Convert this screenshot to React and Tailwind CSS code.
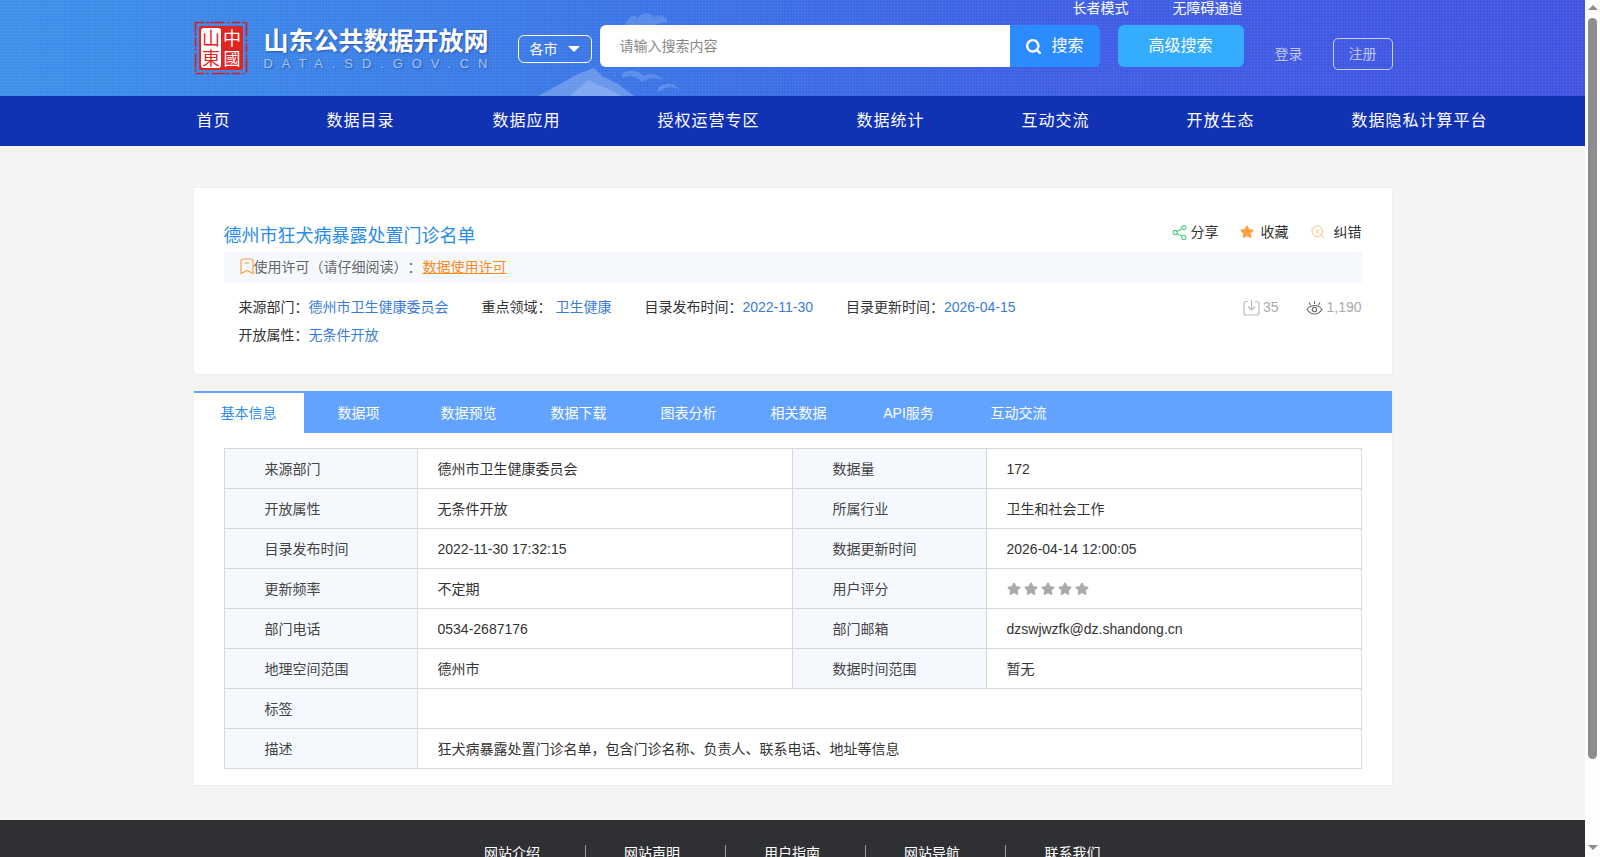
import React from 'react';
import { Search, Star, Share2, SearchX } from 'lucide-react';

const NAV = [
  ['首页', 'w-[130px]'],
  ['数据目录', 'w-[166px]'],
  ['数据应用', 'w-[165px]'],
  ['授权运营专区', 'w-[199px]'],
  ['数据统计', 'w-[165px]'],
  ['互动交流', 'w-[165px]'],
  ['开放生态', 'w-[165px]'],
  ['数据隐私计算平台', 'w-[135px]'],
];

const TABS = ['基本信息', '数据项', '数据预览', '数据下载', '图表分析', '相关数据', 'API服务', '互动交流'];

const ROWS = [
  ['来源部门', '德州市卫生健康委员会', '数据量', '172'],
  ['开放属性', '无条件开放', '所属行业', '卫生和社会工作'],
  ['目录发布时间', '2022-11-30 17:32:15', '数据更新时间', '2026-04-14 12:00:05'],
  ['更新频率', '不定期', '用户评分', 'stars'],
  ['部门电话', '0534-2687176', '部门邮箱', 'dzswjwzfk@dz.shandong.cn'],
  ['地理空间范围', '德州市', '数据时间范围', '暂无'],
];

const FOOTER = ['网站介绍', '网站声明', '用户指南', '网站导航', '联系我们'];

function Logo() {
  return (
    <svg width="54" height="54" viewBox="0 0 54 54" className="shrink-0">
      <rect x="1.5" y="1.5" width="51" height="51" fill="none" stroke="#d81e1e" strokeWidth="1.6" strokeDasharray="9 2 3 1 14 3 2 2" />
      <rect x="5" y="5" width="44" height="44" rx="2" fill="#e0241f" />
      <rect x="7" y="7" width="20" height="40" rx="3" fill="#fff" />
      <text x="17" y="24" textAnchor="middle" fontSize="18" fill="#e0241f" fontFamily="Noto Sans CJK SC">山</text>
      <text x="17" y="44" textAnchor="middle" fontSize="18" fill="#e0241f" fontFamily="Noto Sans CJK SC">東</text>
      <text x="38" y="24" textAnchor="middle" fontSize="18" fill="#fff" fontFamily="Noto Sans CJK SC">中</text>
      <text x="38" y="44" textAnchor="middle" fontSize="17" fill="#fff" fontFamily="Noto Sans CJK SC">國</text>
    </svg>
  );
}

// faint mountain and cloud print behind the search box
function Mountain() {
  return (
    <svg width="170" height="96" viewBox="0 0 170 96" className="absolute left-[530px] top-0" fill="#cfe0fa">
      <path d="M8 96 L30 84 L48 74 L64 68 L72 76 L88 84 L104 96 Z" fillOpacity="0.3" />
      <path d="M40 96 L58 80 L76 88 L92 96 Z" fillOpacity="0.25" />
      <path d="M96 24 C98 16 104 14 108 18 C112 12 120 12 124 17 C130 14 136 16 138 22 C132 24 128 22 124 26 C118 22 112 28 106 26 C102 28 98 28 96 24 Z" fillOpacity="0.2" />
      <path d="M92 74 C100 68 108 70 114 76 C120 72 128 74 134 80 C124 77 118 78 112 82 C106 76 100 74 92 78 Z" fillOpacity="0.22" />
      <path d="M128 88 C134 82 144 82 150 90 C142 86 136 86 128 92 Z" fillOpacity="0.22" />
    </svg>
  );
}

function LicenseIcon() {
  return (
    <svg width="14" height="17" viewBox="0 0 14 17" fill="none" stroke="#ff9f43" strokeWidth="1.2" className="shrink-0 -translate-y-[1px]">
      <path d="M2.5 1h9a1.5 1.5 0 0 1 1.5 1.500V15.500L7 12.500 1 15.500V2.500A1.500 1.500 0 0 1 2.500 1z" />
      <path d="M5 5h4" />
    </svg>
  );
}

function DownloadIcon() {
  return (
    <svg width="17" height="17" viewBox="0 0 17 17" fill="none" stroke="#bbb" strokeWidth="1.2" className="shrink-0">
      <path d="M5 2.500H3A2 2 0 0 0 1 4.500V14a2 2 0 0 0 2 2h11a2 2 0 0 0 2-2V4.500a2 2 0 0 0-2-2h-2" />
      <path d="M8.500 1v9.500M5 7.500l3.500 3.500L12 7.500" />
    </svg>
  );
}

function EyeIcon() {
  return (
    <svg width="17" height="17" viewBox="0 0 17 17" fill="none" stroke="#666" strokeWidth="1.1" className="shrink-0">
      <path d="M1 10.500C3 7.500 5.500 6.500 8.500 6.500s5.500 1 7.500 4c-2 3-4.500 4.500-7.500 4.500S3 13.500 1 10.500z" />
      <circle cx="8.500" cy="10.500" r="2.200" />
      <path d="M8.500 5V2M4.500 6L3 3.500M12.500 6L14 3.500" />
    </svg>
  );
}

function InfoPair({ label, value, className }) {
  return (
    <span className={className}>
      {label}
      <span className="text-[#3a7bd5]">{value}</span>
    </span>
  );
}

export default function App() {
  return (
    <div className="flex h-screen overflow-hidden bg-[#fdfdfd] text-[14px] text-[#333] [text-spacing-trim:space-all] font-['Liberation_Sans','Noto_Sans_CJK_SC',sans-serif]">
      <div className="h-full w-[1585px] shrink-0 overflow-y-auto bg-[#f4f4f4] [scrollbar-width:none]">
        <header className="relative h-[96px] overflow-hidden bg-[linear-gradient(90deg,#3c90ea_0%,#3a78e6_35%,#3d5fe4_65%,#4152e2_100%)]">
          <div className="absolute inset-0 bg-[linear-gradient(rgba(255,255,255,0.04)_1px,transparent_1px),linear-gradient(90deg,rgba(255,255,255,0.04)_1px,transparent_1px)] bg-[size:3px_3px]" />
          <Mountain />
          <div className="relative mx-auto flex h-full w-[1200px] items-start">
            <div className="ml-[1px] mt-[21px]"><Logo /></div>
            <div className="ml-[16px] mt-[26px] w-[232px] shrink-0 text-white [text-shadow:1px_1px_2px_rgba(20,40,120,0.5)]">
              <div className="text-[25px] font-bold leading-[30px] whitespace-nowrap">山东公共数据开放网</div>
              <div className="text-[13px] leading-[16px] tracking-[8.9px] text-[#a3c6f2] whitespace-nowrap">DATA.SD.GOV.CN</div>
            </div>
            <button className="ml-[22px] mt-[35px] flex h-[28px] w-[74px] shrink-0 items-center rounded-[6px] border border-white pl-[11px] text-white">
              各市
              <span className="ml-[10px] h-0 w-0 border-x-[6px] border-t-[6px] border-x-transparent border-t-white" />
            </button>
            <div className="ml-[8px] mt-[25px] flex h-[42px] shrink-0">
              <div className="flex w-[410px] items-center rounded-l-[6px] bg-white pl-[20px] text-[#888]">请输入搜索内容</div>
              <button className="flex w-[90px] items-center justify-center gap-[9px] rounded-r-[6px] bg-[#2a8cff] text-[16px] text-white">
                <Search size={17} strokeWidth={3.4} />
                搜索
              </button>
            </div>
            <button className="ml-[18px] mt-[25px] h-[42px] w-[126px] shrink-0 rounded-[6px] bg-[#34adff] text-[16px] text-white">高级搜索</button>
            <div className="relative ml-[31px] mt-[38px] flex shrink-0 items-center whitespace-nowrap">
              <span className="text-[#c0c8ee]">登录</span>
              <span className="ml-[30px] flex h-[32px] w-[60px] items-center justify-center rounded-[5px] border border-[#c9cff0] text-[#c0c8ee]">注册</span>
              <div className="absolute -top-[38px] right-[150px] flex gap-[44px] whitespace-nowrap leading-[16px] text-white">
                <span>长者模式</span>
                <span>无障碍通道</span>
              </div>
            </div>
          </div>
        </header>

        <nav className="h-[50px] bg-[#1232b4]">
          <div className="mx-auto flex h-full w-[1200px] items-center pl-[4px] text-[16px] tracking-[1px] text-white">
            {NAV.map(([name, width]) => (
              <a key={name} className={`${width} shrink-0 whitespace-nowrap`}>{name}</a>
            ))}
          </div>
        </nav>

        <main className="mx-auto w-[1200px] pt-[41px]">
          <section className="h-[188px] border border-[#eee] bg-white px-[30px] pt-[33px]">
            <div className="flex h-[31px] items-center justify-between">
              <h1 className="mb-[1px] text-[18px] text-[#2a8ce8]">德州市狂犬病暴露处置门诊名单</h1>
              <div className="flex items-center pb-[9px] text-[#333]">
                <Share2 size={17} strokeWidth={1.5} className="text-[#4fd08a]" />
                <span className="ml-[3px]">分享</span>
                <Star size={14} fill="#ff9f43" className="ml-[21px] text-[#ff9f43]" />
                <span className="ml-[7px]">收藏</span>
                <SearchX size={16} strokeWidth={1.5} className="ml-[21px] text-[#f8bd85]" />
                <span className="ml-[8px]">纠错</span>
              </div>
            </div>
            <div className="flex h-[31px] items-center bg-[#f5f9fe] pl-[16px] text-[#666]">
              <LicenseIcon />
              <span>使用许可（请仔细阅读）：</span>
              <a className="ml-[1px] text-[#f98a1e] underline">数据使用许可</a>
            </div>
            <div className="mt-[10px] flex items-center justify-between pl-[15px] leading-[28px]">
              <div className="flex">
                <InfoPair label="来源部门：" value="德州市卫生健康委员会" />
                <InfoPair label="重点领域： " value="卫生健康" className="ml-[33px] whitespace-pre" />
                <InfoPair label="目录发布时间：" value="2022-11-30" className="ml-[33px]" />
                <InfoPair label="目录更新时间：" value="2026-04-15" className="ml-[33px]" />
              </div>
              <div className="flex items-center text-[#aaa]">
                <DownloadIcon />
                <span className="ml-[3px]">35</span>
                <span className="ml-[28px]"><EyeIcon /></span>
                <span className="ml-[3px]">1,190</span>
              </div>
            </div>
            <div className="pl-[15px] leading-[28px]">
              <InfoPair label="开放属性：" value="无条件开放" />
            </div>
          </section>

          <section className="mt-[16px] border-x border-b border-[#eee] bg-white pb-[16px]">
            <div className="flex h-[42px] bg-[#62a3ff] text-white">
              {TABS.map((tab, i) => (
                <div
                  key={tab + i}
                  className={i === 0
                    ? 'mt-[2px] flex w-[110px] items-center justify-center bg-white text-[#2a8ce8]'
                    : 'flex w-[110px] items-center justify-center pt-[2px]'}
                >
                  {tab}
                </div>
              ))}
            </div>
            <div className="mx-[30px] mt-[15px] border-l border-t border-[#d9d9d9]">
              {ROWS.map((row) => (
                <div key={row[0]} className="grid h-[40px] grid-cols-[193px_375px_194px_1fr] leading-[38px] [&>div]:pt-[1px]">
                  <div className="border-b border-r border-[#d9d9d9] bg-[#f5f9fe] pl-[40px] text-[#444]">{row[0]}</div>
                  <div className="border-b border-r border-[#d9d9d9] pl-[20px]">{row[1]}</div>
                  <div className="border-b border-r border-[#d9d9d9] bg-[#f5f9fe] pl-[40px] text-[#444]">{row[2]}</div>
                  <div className="flex items-center gap-[3px] border-b border-r border-[#d9d9d9] pl-[20px]">
                    {row[3] === 'stars'
                      ? [0, 1, 2, 3, 4].map((n) => <Star key={n} size={14} fill="#aaa" className="text-[#aaa]" />)
                      : row[3]}
                  </div>
                </div>
              ))}
              <div className="grid h-[40px] grid-cols-[193px_1fr] leading-[38px] [&>div]:pt-[1px]">
                <div className="border-b border-r border-[#d9d9d9] bg-[#f5f9fe] pl-[40px] text-[#444]">标签</div>
                <div className="border-b border-r border-[#d9d9d9] pl-[20px]" />
              </div>
              <div className="grid h-[40px] grid-cols-[193px_1fr] leading-[38px] [&>div]:pt-[1px]">
                <div className="border-b border-r border-[#d9d9d9] bg-[#f5f9fe] pl-[40px] text-[#444]">描述</div>
                <div className="border-b border-r border-[#d9d9d9] pl-[20px]">狂犬病暴露处置门诊名单，包含门诊名称、负责人、联系电话、地址等信息</div>
              </div>
            </div>
          </section>
        </main>

        <footer className="mt-[34px] h-[140px] bg-[#2f3033] pt-[25px]">
          <div className="mx-auto flex w-[700px] translate-x-[3px] text-white">
            {FOOTER.map((item, i) => (
              <a key={item} className={i < 4 ? 'h-[16px] w-[140px] border-r border-[#999] pr-[6px] text-center leading-[16px]' : 'h-[16px] w-[140px] pr-[6px] text-center leading-[16px]'}>{item}</a>
            ))}
          </div>
        </footer>
      </div>

      {/* page scrollbar as it appears in the picture */}
      <div className="flex h-full w-[15px] shrink-0 flex-col items-center bg-[#fdfdfd]">
        <span className="mt-[5px] h-0 w-0 border-x-[5px] border-b-[5px] border-x-transparent border-b-[#8d8d8d]" />
        <span className="mt-[8px] h-[741px] w-[9px] rounded-[5px] bg-[#8d8d8d]" />
        <span className="mt-auto mb-[7px] h-0 w-0 border-x-[5px] border-t-[5px] border-x-transparent border-t-[#8d8d8d]" />
      </div>
    </div>
  );
}
